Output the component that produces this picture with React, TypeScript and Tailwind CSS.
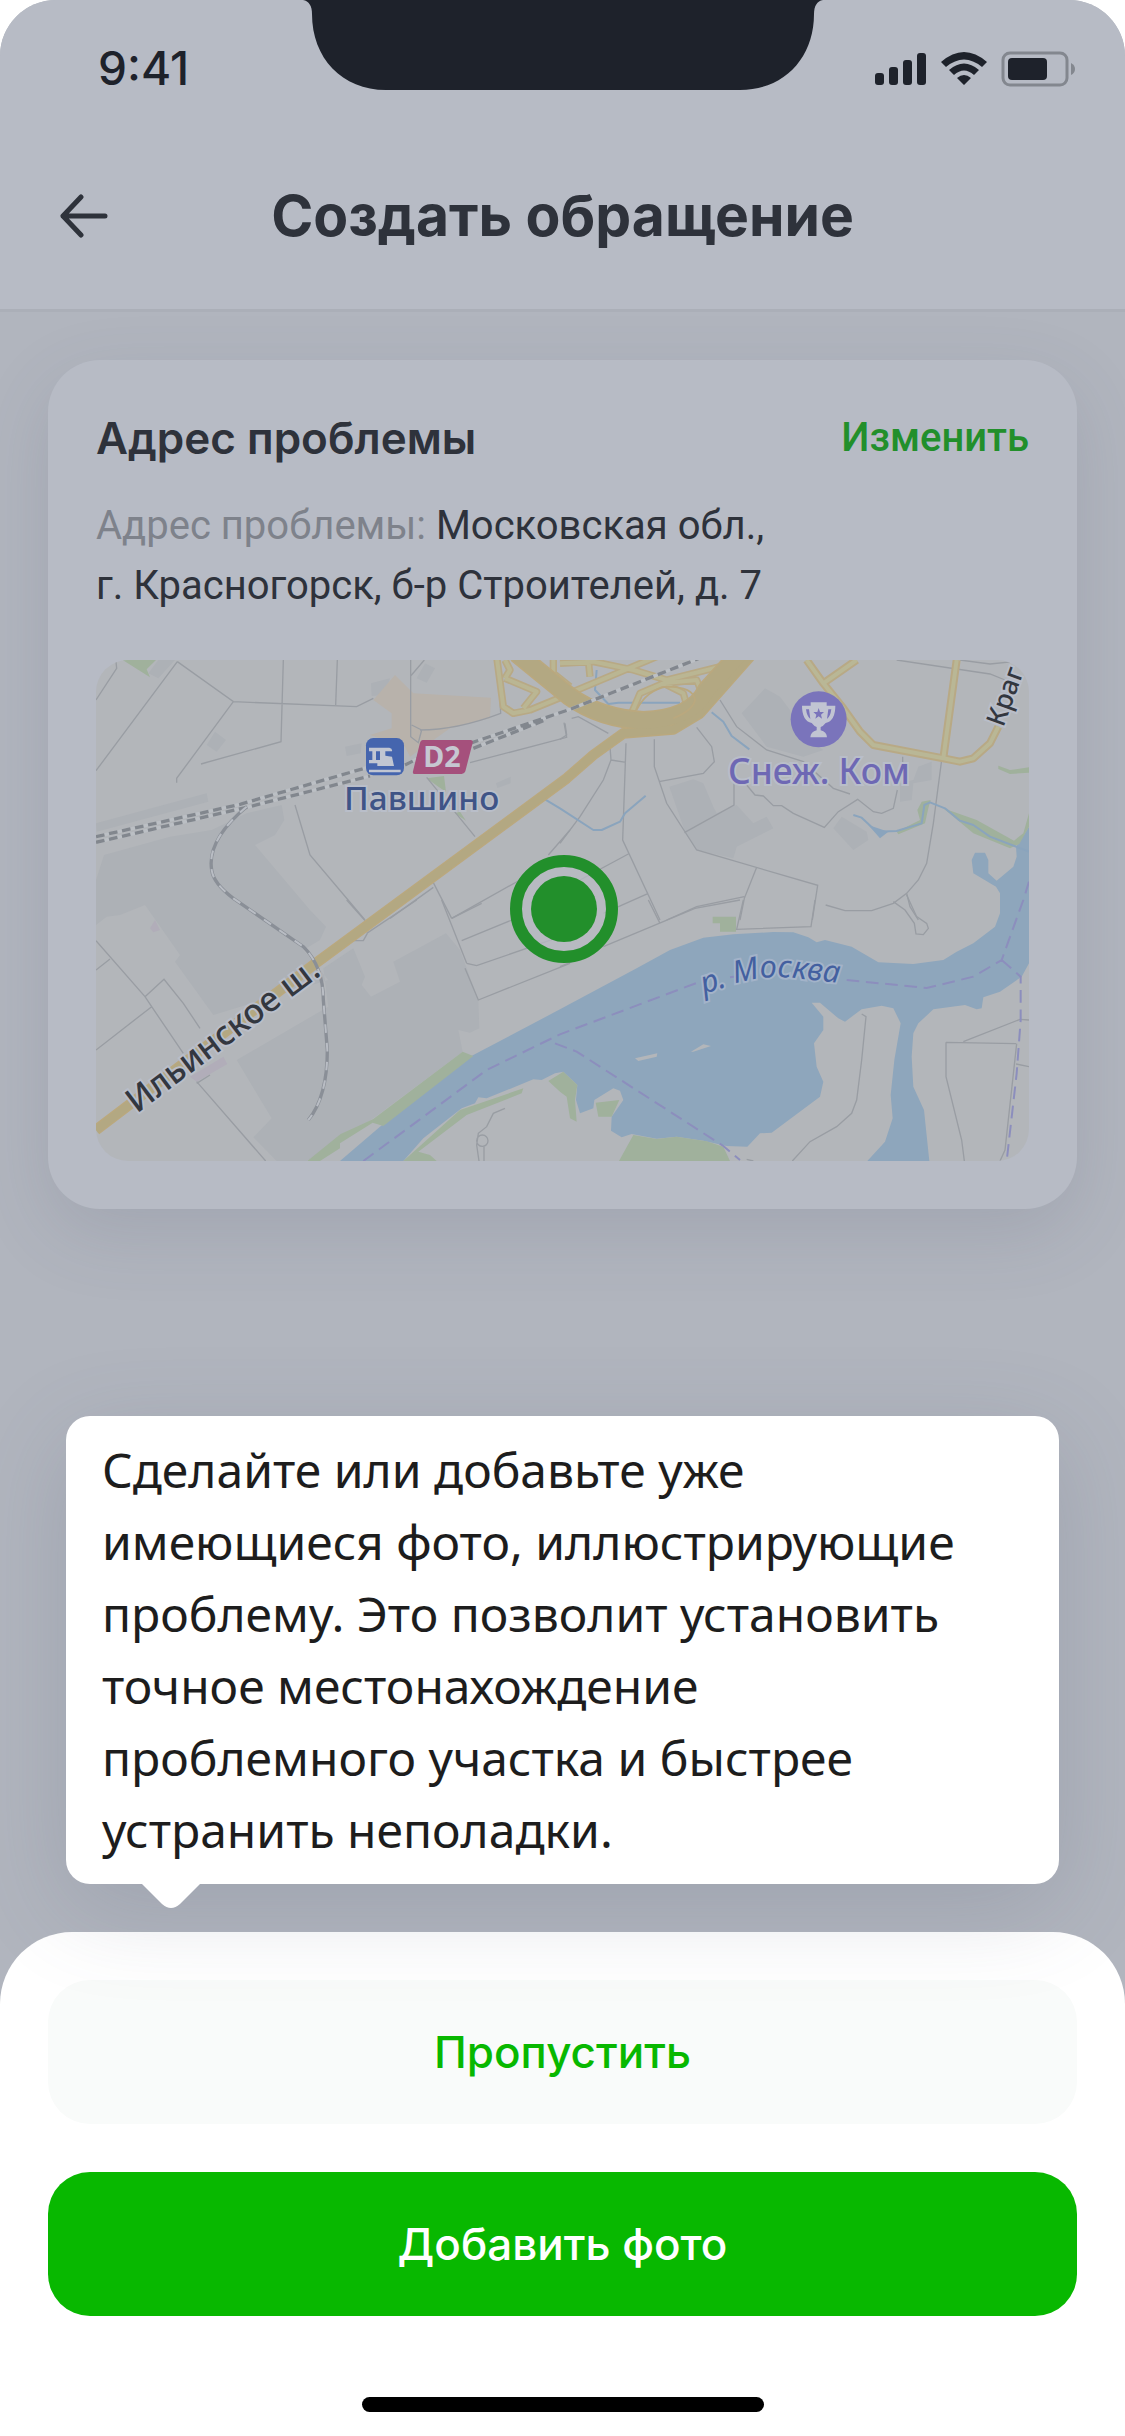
import type { ReactNode } from "react";

interface Tile {
  id: string;
  x: number;
  y: number;
  blocks: string;
  sand?: string;
  parks: string;
  streets: string;
}

// The map is drawn in four tiles, each one has its own origin
const TILES: Tile[] = [
  {
    id: "nw",
    x: -18,
    y: -30,
    blocks:
      "M18 520L350 430 355 455 20 545ZM350 285L375 245 408 270 380 305ZM765 290L815 280 812 310 770 318ZM980 85L1005 40 1035 55 1010 98ZM843 100L900 85 885 135 845 138ZM1218 400L1262 380V400L1222 414ZM205 30H255L205 85 175 70Z",
    sand: "M850 150L915 75 970 130 1203 143 1200 205 1080 235 960 320 945 290 840 255 905 235 905 190Z",
    parks: "M98 30H198L170 58 180 82ZM1010 385L1062 378 1068 425 1045 410ZM1095 490L1110 485 1128 512Z",
    streets:
      "M78 35L80 55 18 150M262 35L18 362M262 35L430 155 800 170 850 145M430 155L260 385V398M580 30L573 275 333 342M742 30L737 165M962 30V260L985 278 995 240 965 225M962 78L1003 30M990 240Q1100 240 1232 190L1225 60M1422 218L1430 262 1140 338M615 465L660 615 825 810M1010 382L1155 560M1030 698L1085 805M1030 712L900 805M1085 805L1290 690M1440 540L1375 615",
  },
  {
    id: "ne",
    x: 1392,
    y: -30,
    blocks:
      "M545 190L615 115 660 140 690 180 700 240 790 300 730 320 620 290ZM328 410L400 388 430 400 460 470 470 490 530 465 580 520 620 500 640 535 530 590 520 625 410 600 375 545ZM820 535L845 500 920 545 925 570 880 600ZM1060 390L1075 350 1115 335V390L1060 400 1055 450 1020 455V400Z",
    parks:
      "M1010 545L1080 510 1072 480 1085 455 1112 450 1105 475 1095 520 1015 553ZM1150 475L1250 510 1362 572 1390 550 1407 490V530L1378 582 1350 595 1240 550ZM1315 347L1350 360 1407 352V368L1350 372 1315 357Z",
    streets:
      "M0 580L60 500 130 390 153 330 150 290M153 330L198 337M198 280L188 570 300 810M283 268V350L320 460 410 600 773 706 757 810M297 395L430 370 463 335 455 290 410 232M373 548L522 465V400M590 652L553 745 540 810M553 740L410 770 320 810M480 150L530 230 620 300 730 335 820 415 870 432M560 405L585 435 610 438 640 467H665L700 490 793 532 835 485 893 448 940 485 965 490 1000 475 1012 420M1028 320V350M1145 330L1120 520 1100 640 1075 690 1040 730 1000 760 935 782H855L797 765M1040 730L1050 770 1075 810M1010 30L1290 72 1335 90M1200 30L1290 42 1360 35M35 205L55 200 145 250M15 220L20 255 0 268M60 690L205 612M130 790L265 730",
  },
  {
    id: "sw",
    x: -18,
    y: 720,
    blocks:
      "M715 320L440 480 545 655 490 712 560 783H650L850 655 1118 455 1105 390 1140 398 1168 385 1165 300 1110 150 1068 100 910 185 930 245 843 290 815 255 825 230 790 145 700 205ZM42 -135L240 -190 365 -210 470 -260 575 -285 583 -240 555 -195 495 -165 660 30 708 80 690 120 640 150 715 240 370 345 255 185 270 165 165 15 90 45 50 50 18 75V-60Z",
    parks:
      "M652 783L752 702 800 680 850 657 1118 455 1150 468 880 678 848 668 750 730V745L690 783ZM940 783L1010 720 1110 630 1300 565 1295 580 1130 645 985 755 1020 765 1040 783Z",
    streets:
      "M18 122L165 290 185 320 280 460M18 210L60 177M18 450L185 320M165 290L222 238 280 310 330 385M320 545L527 783M320 550L360 525M770 0L825 62M980 0L830 100M1055 0L1130 190M1125 205L1165 300 1440 190M1085 55L1175 10M1115 122L1290 50M1130 190L1160 197 1440 100M790 122H820L832 100M1245 625L1210 640 1190 680 1165 700 1160 735 1167 783M1182 783V740M1160 722A17 17 0 1 0 1194 722A17 17 0 1 0 1160 722",
  },
  {
    id: "se",
    x: 1392,
    y: 720,
    blocks: "",
    parks:
      "M458 50H528V95H480V70H458ZM107 608L178 600 155 650H115ZM177 783L220 705 290 717 350 710 440 724 490 740 510 783ZM-35 543L10 515 52 555 45 600 50 665 30 655 20 590 0 575Z",
    streets:
      "M265 0L300 70M130 140L405 25 540 0M550 0L530 88 753 80 765 0M1000 5L1035 30 1063 70 1068 102 1090 104 1105 85 1100 70 1070 50 1040 -15M905 342L918 350 905 480 890 600 875 640 830 680 750 725 697 783M1158 427L1368 431M1158 427V530L1205 720 1213 783M1210 425L1380 358 1407 360M1370 431L1335 750 1320 783M1368 492L1407 500M0 200L60 175M560 778L580 783",
  },
];

const RIVER =
  "M-660 783L-540 680 -295 485 -270 470 0 328 230 205 330 150 430 113 520 103 640 96 700 97 745 112 770 127 795 120 875 140 955 187 1060 192 1150 180 1190 155 1240 130 1305 80 1320 40V-20L1308 -40 1240 -80 1235 -120 1245 -142H1275L1285 -120V-80L1310 -58 1360 -100 1370 -130 1368 -160 1395 -200 1407 -220V190L1385 230 1320 275 1270 292 1265 325 1250 328 1215 315 1120 328 1075 370 1060 400 1055 470 1060 560 1092 630 1108 783H922L975 725 998 655 992 585 1003 480 1022 370 1000 325 965 317 905 328 855 365 835 355 780 308 755 308 790 350V390L762 430 770 500 790 545 780 590 635 698 600 700 562 740 500 738 430 722 350 710 290 716 215 702 185 712 153 692 155 650 190 600 180 572 160 565 103 600 100 625 60 640 48 600 52 555 10 515 -15 520 -55 540 -80 538 -220 595 -245 592 -255 610 -295 625 -410 715 -470 783Z";

const STREAMS =
  "M880 495L905 503 950 545 1010 543 1085 520 1093 465 1110 457 1155 475 1200 512 1240 525 1290 560 1407 605M-50 445L0 475 100 540H125L180 515 195 490 257 437M455 187L490 215 515 258 568 298M110 60L105 120 145 162 175 158H360";

const HIGHWAY = "M-1392 1440L-740 945 20 385 100 315 190 250 340 238 420 190 570 20";
const RING = "M-130 10L30 140Q120 205 250 212 400 205 440 120L540 10";

const AVENUES =
  "M740 30L790 100 850 175 900 245 940 285 1150 325 1200 335 1240 325 1290 280 1315 230M790 100L890 30M1190 30L1150 325";

const RAMPS =
  "M40 125L290 20M0 40L100 35 220 60 320 90 520 40M210 200L240 130 310 100 410 90 430 140M310 100L370 130 380 165M85 30L90 80M-190 20L-170 170 -140 190 -90 180 20 135M-165 85L-150 60 -165 30M-165 85L-70 125 -110 175M-20 30V70L30 110";

const RAILS =
  "M18 560L450 463 830 353M18 577L470 472 840 378M945 345L985 325M1140 280L1440 178 1840 20M1150 295L1360 212";
const RAIL_BRANCH = "M470 470Q350 570 365 660 370 700 430 745L640 890Q700 950 700 1050L712 1200Q712 1340 655 1410";

const FERRY =
  "M-590 783L-450 680 -220 510 0 403 420 245M510 232L560 225M860 240L1100 264 1240 230 1325 180 1390 0 1407 -55M1325 180L1382 230V360L1370 520 1340 783M-15 430L50 455 490 738 540 780";

function TileLayer({ pick, children }: { pick?: string; children: (t: Tile) => ReactNode }) {
  return (
    <>
      {TILES.filter((t) => !pick || t.id === pick).map((t) => (
        <g key={t.id} transform={`translate(${t.x} ${t.y})`}>
          {children(t)}
        </g>
      ))}
    </>
  );
}

function AddressMap() {
  return (
    <svg
      viewBox="0 0 2799 1503"
      className="mt-11 block w-full rounded-[32px] font-['Noto_Sans',sans-serif]"
      role="img"
      aria-label="Карта"
    >
      <rect width="2799" height="1503" fill="#b3b6ba" />
      <TileLayer>
        {(t) => (
          <>
            <path d={t.blocks} fill="#adb1b6" />
            {t.sand && <path d={t.sand} fill="#b8b2ab" />}
          </>
        )}
      </TileLayer>
      <TileLayer pick="sw">{() => <path d="M300 530L400 470 412 492 320 545ZM180 85L195 60 210 90 190 97Z" fill="#b1adb9" />}</TileLayer>
      <TileLayer pick="se">
        {() => (
          <>
            <path d={RIVER} fill="#8ea6bc" />
            <path d="M225 475L292 460 290 470 235 483ZM393 455L430 433 453 438 400 455Z" fill="#b3b6ba" />
          </>
        )}
      </TileLayer>
      <TileLayer>
        {(t) => (
          <>
            <path d={t.parks} fill="#a0b19c" />
            <path d={t.streets} fill="none" stroke="#999da3" strokeWidth="4" />
          </>
        )}
      </TileLayer>
      <TileLayer pick="ne">
        {() => (
          <g fill="none" strokeLinejoin="round">
            <path d={STREAMS} stroke="#8aa4bd" strokeWidth="6" />
            <path d="M925 525L960 565 985 545Z" fill="#8aa4bd" />
            <path d={RAMPS} stroke="#b8a985" strokeWidth="22" />
            <path d={RAMPS} stroke="#bab693" strokeWidth="12" />
            <path d={AVENUES} stroke="#b8a985" strokeWidth="24" />
            <path d={AVENUES} stroke="#b9b796" strokeWidth="12" />
            <path d={HIGHWAY} stroke="#baa87e" strokeWidth="32" />
            <path d={RING} stroke="#baa87e" strokeWidth="58" />
            <path d={HIGHWAY} stroke="#b3a882" strokeWidth="24" />
            <path d={RING} stroke="#b3a882" strokeWidth="48" />
            <path d="M230 180Q260 120 320 110 400 110 405 150 400 180 340 205" stroke="#baa87e" strokeWidth="5" />
          </g>
        )}
      </TileLayer>
      <TileLayer pick="nw">
        {() => (
          <g fill="none">
            <path d={RAILS} stroke="#bbbfc4" strokeWidth="10" />
            <path d={RAILS} stroke="#82878e" strokeWidth="10" strokeDasharray="26 14" />
            <path d={RAIL_BRANCH} stroke="#8a8f97" strokeWidth="10" />
            <path d={RAIL_BRANCH} stroke="#b9bdc4" strokeWidth="6" strokeDasharray="26 30" />
          </g>
        )}
      </TileLayer>
      <TileLayer pick="se">
        {() => <path d={FERRY} fill="none" stroke="#8c8ebd" strokeWidth="6" strokeDasharray="38 20" />}
      </TileLayer>

      {/* labels */}
      <TileLayer pick="nw">
        {() => (
          <>
            <rect x="828" y="264" width="114" height="112" rx="22" fill="#4565ae" />
            <path d="M837 293H898Q908 296 906 304H886V317L906 320 912 348H862V340H837V330H847V304H837ZM858 304V330H870V304ZM837 359H932V367H837Z" fill="#c1c6d2" fillRule="evenodd" />
            <path d="M998 270H1142Q1150 270 1148 278L1126 364Q1123 372 1115 372H974Q967 372 969 364L990 278Q992 270 998 270Z" fill="#a5507c" />
            <text x="1000" y="352" fontSize="86" fontWeight="700" fill="#c6c7d1">
              D2
            </text>
            <text x="762" y="480" fontSize="100" fontWeight="500" fill="#3f5487" stroke="#b9bec9" strokeWidth="12" paintOrder="stroke">
              Павшино
            </text>
          </>
        )}
      </TileLayer>
      <TileLayer pick="ne">
        {() => (
          <>
            <circle cx="776" cy="208" r="84" fill="#7a74bb" />
            <path d="M752 157H800V167H826Q826 212 797 219 790 228 782 231V241Q800 246 801 262H751Q752 246 770 241V231Q762 228 755 219 726 212 726 167H752ZM738 178Q741 200 751 207L747 178ZM814 178H805L801 207Q811 200 814 178Z" fill="#c1c4d2" fillRule="evenodd" />
            <path d="M776 174L780 186H792L783 194 786 206 776 199 766 206 769 194 760 186H772Z" fill="#7a74bb" />
            <text x="504" y="402" fontSize="106" fontWeight="500" fill="#6e68b4" stroke="#b9bec9" strokeWidth="12" paintOrder="stroke">
              Снеж. Ком
            </text>
            <text transform="translate(1330 234) rotate(-70)" fontSize="80" fontWeight="500" fill="#33373f" stroke="#b9bec9" strokeWidth="12" paintOrder="stroke">
              Краг
            </text>
          </>
        )}
      </TileLayer>
      <TileLayer pick="sw">
        {() => (
          <text transform="translate(140 642) rotate(-37)" fontSize="102" fontWeight="500" fill="#33373f" stroke="#b9bec9" strokeWidth="12" paintOrder="stroke">
            Ильинское ш.
          </text>
        )}
      </TileLayer>
      <TileLayer pick="se">
        {() => (
          <>
            <path id="river-name" d="M432 282L530 250Q620 222 720 236L900 256" fill="none" />
            <text fontSize="92" fontStyle="italic" fill="#4360a0" stroke="#a3b3c9" strokeWidth="12" paintOrder="stroke">
              <textPath href="#river-name">р. Москва</textPath>
            </text>
          </>
        )}
      </TileLayer>

      {/* marker */}
      <circle cx="1404" cy="747" r="126" fill="#b9bcc4" fillOpacity="0.7" />
      <circle cx="1404" cy="747" r="144" fill="none" stroke="#228f2b" strokeWidth="36" />
      <circle cx="1404" cy="747" r="99" fill="#228f2b" />
    </svg>
  );
}

function StatusBar() {
  return (
    <div className="relative flex h-[132px] items-start justify-between pr-[48px] pl-[98px] pt-[40px] text-[#1e222b]">
      <svg viewBox="0 0 520 90" className="absolute top-0 left-1/2 h-[90px] w-[520px] -translate-x-1/2" fill="#1e222b" aria-hidden="true">
        <path d="M0 0C6 1 9 6 9 14C9 58 39 90 83 90H437C481 90 511 58 511 14C511 6 514 1 520 0Z" />
      </svg>
      <span className="text-[46px] leading-[56px] font-medium">9:41</span>
      <svg viewBox="0 0 202 36" className="mt-[11px] h-[36px] w-[202px]" fill="#1e222b" aria-hidden="true">
        <rect x="0" y="22" width="9" height="12" rx="3" />
        <rect x="14" y="16" width="9" height="18" rx="3" />
        <rect x="28" y="9" width="9" height="25" rx="3" />
        <rect x="42" y="2" width="9" height="32" rx="3" />
        <path d="M66 11Q89 -9 112 11L107 16Q89 1 71 16ZM74 19Q89 6 104 19L99 24Q89 15 79 24ZM82 27Q89 21 96 27L89 34Z" />
        <rect x="128" y="2" width="64" height="32" rx="7" fill="none" stroke="#83878f" strokeWidth="3" />
        <rect x="133" y="7" width="39" height="22" rx="4" />
        <path d="M196 12Q200 14 200 18T196 24Z" fill="#83878f" />
      </svg>
    </div>
  );
}

export default function App() {
  return (
    <div className="bg-white font-['Inter',sans-serif]">
      <div className="flex min-h-screen flex-col overflow-hidden rounded-t-[56px] bg-[#b1b5be] text-[#2e323b]">
        <header className="border-b-3 border-[#abafb8] bg-[#b7bbc5]">
          <StatusBar />
          <div className="grid h-[177px] grid-cols-[72px_1fr_72px] items-start px-12">
            <button type="button" aria-label="Назад" className="mt-[54px] flex h-[60px] w-[72px] items-center pl-3">
              <svg viewBox="0 0 48 44" className="h-[44px] w-[48px]" fill="none" stroke="currentColor" strokeWidth="5" strokeLinecap="round" strokeLinejoin="round">
                <path d="M45 22H3M21 3L3 22L21 41" />
              </svg>
            </button>
            <h1 className="mt-[48px] text-center text-[57px] leading-[72px] font-bold whitespace-nowrap">Создать обращение</h1>
          </div>
        </header>

        <main className="flex-1 px-12 pt-12 pb-[207px]">
          <section className="rounded-[52px] bg-[#b7bbc5] p-12 shadow-[0_24px_72px_rgba(80,88,115,0.16)]">
            <div className="flex items-center justify-between leading-[60px]">
              <h2 className="text-[44px] font-semibold">Адрес проблемы</h2>
              <button type="button" className="font-['Roboto',sans-serif] text-[40px] font-medium text-[#228f2b]">
                Изменить
              </button>
            </div>
            <p className="mt-7 font-['Roboto',sans-serif] text-[40px] leading-[60px]">
              <span className="text-[#7e828b]">Адрес проблемы:</span> Московская обл.,
              <br />
              г. Красногорск, б-р Строителей, д. 7
            </p>
            <AddressMap />
          </section>
        </main>

        <div role="tooltip" className="relative z-10 mx-[66px] mb-12 rounded-3xl bg-white px-9 py-[18px] shadow-[0_24px_96px_rgba(80,88,115,0.2)]">
          <p className="max-w-[880px] font-['Noto_Sans',sans-serif] text-[48px] leading-[72px] text-[#1d1d1d]">
            Сделайте или добавьте уже имеющиеся фото, иллюстрирующие проблему. Это позволит установить точное местонахождение
            проблемного участка и быстрее устранить неполадки.
          </p>
          <svg viewBox="0 0 58 24" className="absolute top-full left-[76px] h-6 w-[58px]" fill="white" aria-hidden="true">
            <path d="M0 0L20 20Q29 28 38 20L58 0Z" />
          </svg>
        </div>

        <div className="flex flex-col rounded-t-[72px] bg-white px-12 pt-12 pb-6">
          <button type="button" className="h-36 rounded-[42px] bg-[#f9fbfa] text-[44px] font-medium text-[#08b800]">
            Пропустить
          </button>
          <button type="button" className="mt-12 h-36 rounded-[42px] bg-[#08b800] text-[44px] font-medium text-white">
            Добавить фото
          </button>
          <div className="mt-[81px] h-[15px] w-[402px] self-center rounded-full bg-black" />
        </div>
      </div>
    </div>
  );
}
